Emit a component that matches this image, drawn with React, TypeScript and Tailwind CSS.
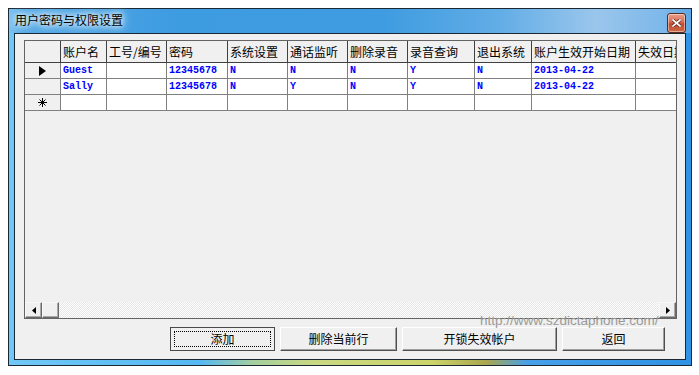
import React from "react";

const cols = [
  { label: "账户名", w: 46 },
  { label: "工号/编号", w: 60 },
  { label: "密码", w: 61 },
  { label: "系统设置", w: 60 },
  { label: "通话监听", w: 60 },
  { label: "删除录音", w: 60 },
  { label: "录音查询", w: 67 },
  { label: "退出系统", w: 57 },
  { label: "账户生效开始日期", w: 104 },
  { label: "失效日期", w: 80 },
];

const rows = [
  ["Guest", "", "12345678", "N", "N", "N", "Y", "N", "2013-04-22", ""],
  ["Sally", "", "12345678", "N", "Y", "N", "Y", "N", "2013-04-22", ""],
];

const cjk = "font-['SimSun','Noto_Sans_CJK_SC',sans-serif]";

function Asterisk() {
  return (
    <svg width="9" height="9" viewBox="0 0 9 9" className="block">
      <g stroke="#000" strokeWidth="1" shapeRendering="crispEdges">
        <line x1="4.5" y1="0" x2="4.5" y2="9" />
        <line x1="0" y1="4.5" x2="9" y2="4.5" />
      </g>
      <g stroke="#000" strokeWidth="1">
        <line x1="1.5" y1="1.5" x2="7.5" y2="7.5" />
        <line x1="7.5" y1="1.5" x2="1.5" y2="7.5" />
      </g>
    </svg>
  );
}

function Btn({ label, w, def }: { label: string; w: number; def?: boolean }) {
  return (
    <div
      style={{ width: w }}
      className={`h-[24px] shrink-0 bg-[#f0f0f0] ${
        def
          ? "border border-[#4a4a4a] p-[3px]"
          : "border-t border-l border-t-white border-l-white border-r border-b border-r-[#505050] border-b-[#505050] shadow-[inset_-1px_-1px_0_#a0a0a0]"
      }`}
    >
      <div
        className={`h-full w-full flex items-center justify-center text-[12px] text-black ${cjk} ${
          def ? "border border-dotted border-black" : ""
        }`}
      >
        {label}
      </div>
    </div>
  );
}

function ScrollBtn({ dir }: { dir: "l" | "r" }) {
  return (
    <div className="w-[17px] h-[16px] shrink-0 bg-[#f0f0f0] border-t border-l border-t-[#f8f8f8] border-l-[#f8f8f8] border-r border-b border-r-[#6a6a6a] border-b-[#6a6a6a] shadow-[inset_-1px_-1px_0_#a8a8a8] flex items-center justify-center">
      {dir === "l" ? (
        <svg width="4" height="7" viewBox="0 0 4 7">
          <path d="M4 0 L0 3.5 L4 7 Z" fill="#000" />
        </svg>
      ) : (
        <svg width="4" height="7" viewBox="0 0 4 7">
          <path d="M0 0 L4 3.5 L0 7 Z" fill="#000" />
        </svg>
      )}
    </div>
  );
}

export default function App() {
  return (
    <div className="w-[699px] h-[375px] bg-white overflow-hidden pt-[8px] pl-[8px]">
      {/* window frame */}
      <div className="w-[684px] h-[358px] border border-[#1b2733] bg-[linear-gradient(to_right,#70c8f6_0%,#56b8f2_28%,#a7cf9e_36%,#c9d983_45%,#ccd46a_62%,#a9a64f_70%,#48a0e8_76%,#2f92e4_100%)] flex flex-col px-[5px] pb-[5px]">
        {/* title bar */}
        <div className="-mx-[5px] h-[24px] shrink-0 flex bg-[linear-gradient(to_right,#7cc2f0_0%,#55aae6_2%,#3d9be0_25%,#3f9ce0_55%,#62ade6_72%,#9ac6ec_86%,#7db8ea_96%,#5da8e6_100%)]">
          <div className={`pl-[6px] pt-[5px] text-[12px] leading-none text-black ${cjk} [text-shadow:0_0_5px_#fff,0_0_9px_#fff,0_0_12px_#e8f4ff]`}>
            用户密码与权限设置
          </div>
          <div className="ml-auto mr-[5px] mt-[4px] w-[19px] h-[20px] rounded-[3px] border border-[#5a2a20] bg-[linear-gradient(to_bottom,#e8a08c_0%,#d86a4e_45%,#c24a2c_55%,#cf6a46_100%)] shadow-[inset_0_0_0_1px_rgba(255,255,255,0.45)] flex items-center justify-center">
            <svg width="9" height="8" viewBox="0 0 9 8">
              <path
                d="M1 1 L8 7 M8 1 L1 7"
                stroke="#5a2418"
                strokeWidth="3.2"
                strokeLinecap="square"
              />
              <path
                d="M1 1 L8 7 M8 1 L1 7"
                stroke="#fff"
                strokeWidth="1.7"
                strokeLinecap="square"
              />
            </svg>
          </div>
        </div>

        {/* client area */}
        <div className="relative flex-1 border border-[#1b2733] bg-[#f0f0f0] flex flex-col">
          {/* grid */}
          <div className="ml-[9px] mt-[6px] w-[653px] h-[279px] border border-[#646464] bg-[#f0f0f0] flex flex-col overflow-hidden">
            {/* header */}
            <div className="flex h-[22px] shrink-0">
              <div className="w-[36px] shrink-0 border-r border-b border-[#404040] bg-[#f0f0f0]" />
              {cols.map((c) => (
                <div
                  key={c.label}
                  style={{ width: c.w }}
                  className={`shrink-0 border-r border-b border-[#404040] bg-[#f0f0f0] pl-[2px] pt-[4px] text-[12px] leading-[13px] text-black whitespace-nowrap overflow-hidden ${cjk}`}
                >
                  {c.label}
                </div>
              ))}
            </div>
            {/* data rows */}
            {[...rows, null].map((r, i) => (
              <div key={i} className="flex h-[16px] shrink-0">
                <div className="w-[36px] shrink-0 border-r border-b border-[#808080] bg-[#f0f0f0] flex items-center justify-center">
                  {i === 0 && (
                    <svg width="7" height="10" viewBox="0 0 7 10">
                      <path d="M0 0 L7 5 L0 10 Z" fill="#000" />
                    </svg>
                  )}
                  {i === 2 && <Asterisk />}
                </div>
                {cols.map((c, j) => (
                  <div
                    key={c.label}
                    style={{ width: c.w }}
                    className="shrink-0 border-r border-b border-[#808080] bg-white pl-[2px] flex items-center text-[10px] leading-none font-bold text-[#0000ff] font-['Liberation_Mono',monospace] whitespace-nowrap overflow-hidden"
                  >
                    {r ? r[j] : ""}
                  </div>
                ))}
              </div>
            ))}
            <div className="flex-1" />
            {/* horizontal scrollbar */}
            <div className="flex h-[16px] shrink-0">
              <ScrollBtn dir="l" />
              <div className="w-[17px] h-[16px] shrink-0 bg-[#f0f0f0] border-t border-l border-t-[#f8f8f8] border-l-[#f8f8f8] border-r border-b border-r-[#6a6a6a] border-b-[#6a6a6a] shadow-[inset_-1px_-1px_0_#a8a8a8]" />
              <div className="flex-1 bg-[repeating-conic-gradient(#ffffff_0%_25%,#e6e6e6_0%_50%)] bg-[length:2px_2px]" />
              <ScrollBtn dir="r" />
            </div>
          </div>

          {/* buttons */}
          <div className="mt-[8px] flex justify-end gap-[5px] pr-[20px]">
            <Btn label="添加" w={105} def />
            <Btn label="删除当前行" w={117} />
            <Btn label="开锁失效帐户" w={155} />
            <Btn label="返回" w={103} />
          </div>

          {/* watermark */}
          <div className="absolute left-[465px] top-[280px] text-[13.5px] leading-none text-[#9a9a9a] font-['Liberation_Sans',sans-serif] whitespace-nowrap">
            http://www.szdictaphone.com/
          </div>
        </div>
      </div>
    </div>
  );
}
